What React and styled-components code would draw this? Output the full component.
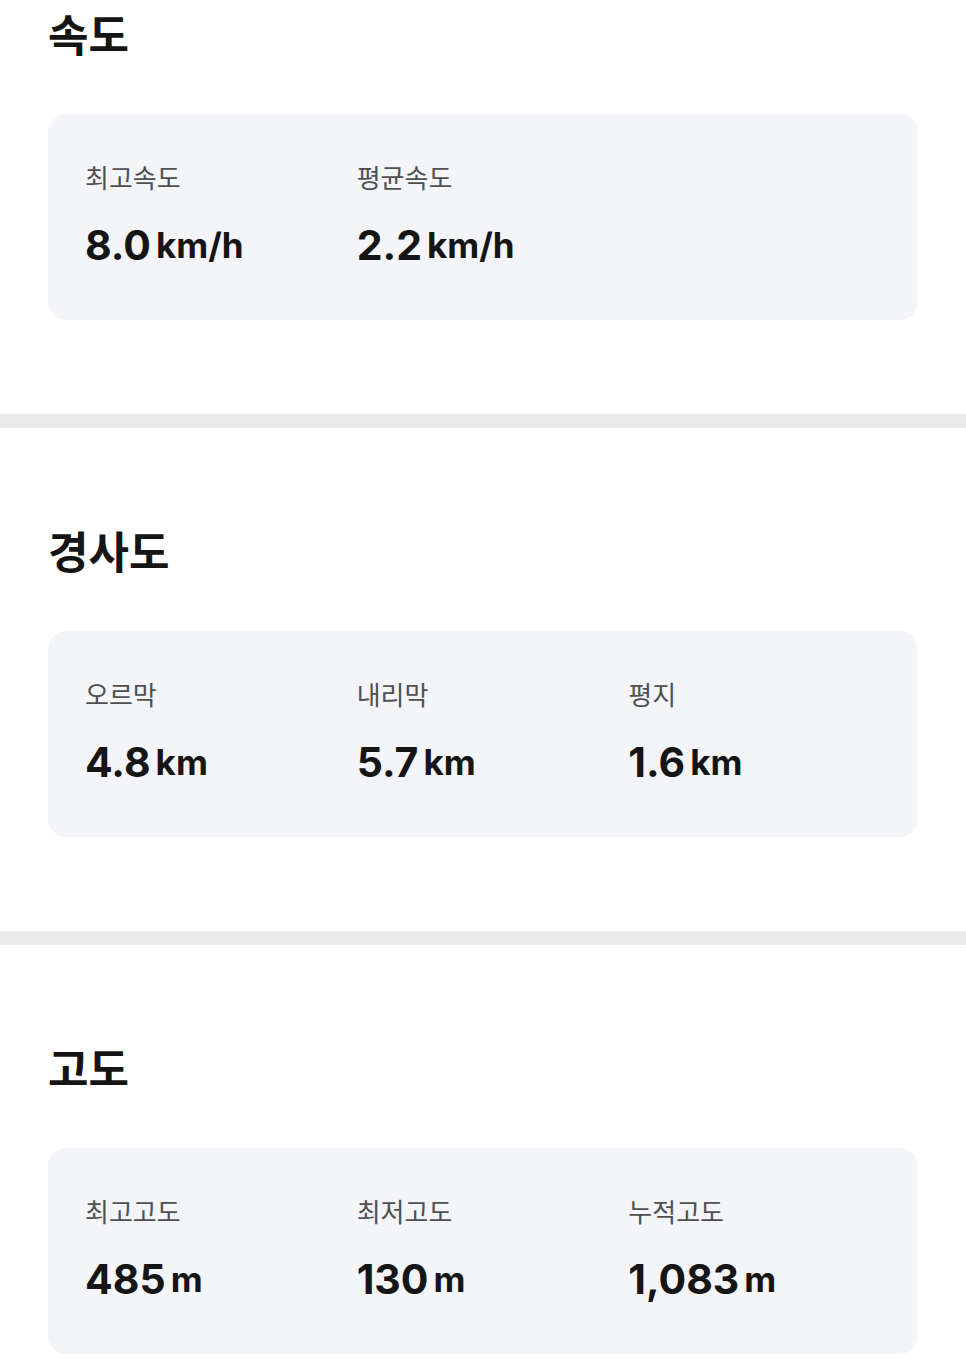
import React from "react";
import styled, { createGlobalStyle } from "styled-components";

const GlobalStyle = createGlobalStyle`
  * {
    box-sizing: border-box;
  }

  body {
    margin: 0;
    background: #ffffff;
    color: #151515;
    font-family: Inter, "Noto Sans CJK KR", sans-serif;
  }
`;

const Page = styled.main`
  overflow: hidden;
`;

const Section = styled.section`
  padding: ${(props) => (props.$first ? "4px" : "93px")} 48px
    ${(props) => (props.$last ? "10px" : "94px")};

  & + & {
    border-top: 14px solid #e9e9e9;
  }
`;

const Title = styled.h2`
  margin: 0 0 46px;
  font-size: 44px;
  font-weight: 700;
  line-height: 64px;
`;

const Card = styled.dl`
  display: grid;
  grid-template-columns: repeat(3, 1fr);
  margin: 0;
  padding: 44px 18px 44px 37px;
  border-radius: 18px;
  background: #f4f5f9;
`;

const Stat = styled.div`
  display: flex;
  flex-direction: column;
  gap: 14px;
`;

const Label = styled.dt`
  color: #505050;
  font-size: 26px;
  line-height: 42px;
`;

const Value = styled.dd`
  display: flex;
  align-items: center;
  gap: 5px;
  margin: 0;
  font-size: 41px;
  font-weight: 700;
  line-height: 62px;
`;

const Unit = styled.span`
  font-size: 35px;
`;

const sections = [
  {
    title: "속도",
    stats: [
      { label: "최고속도", value: "8.0", unit: "km/h" },
      { label: "평균속도", value: "2.2", unit: "km/h" },
    ],
  },
  {
    title: "경사도",
    stats: [
      { label: "오르막", value: "4.8", unit: "km" },
      { label: "내리막", value: "5.7", unit: "km" },
      { label: "평지", value: "1.6", unit: "km" },
    ],
  },
  {
    title: "고도",
    stats: [
      { label: "최고고도", value: "485", unit: "m" },
      { label: "최저고도", value: "130", unit: "m" },
      { label: "누적고도", value: "1,083", unit: "m" },
    ],
  },
];

const App = () => {
  return (
    <>
      <GlobalStyle />
      <Page lang="ko">
        {sections.map(({ title, stats }, index) => (
          <Section
            key={title}
            $first={index === 0}
            $last={index === sections.length - 1}
          >
            <Title>{title}</Title>
            <Card>
              {stats.map(({ label, value, unit }) => (
                <Stat key={label}>
                  <Label>{label}</Label>
                  <Value>
                    {value}
                    <Unit>{unit}</Unit>
                  </Value>
                </Stat>
              ))}
            </Card>
          </Section>
        ))}
      </Page>
    </>
  );
};

export default App;
